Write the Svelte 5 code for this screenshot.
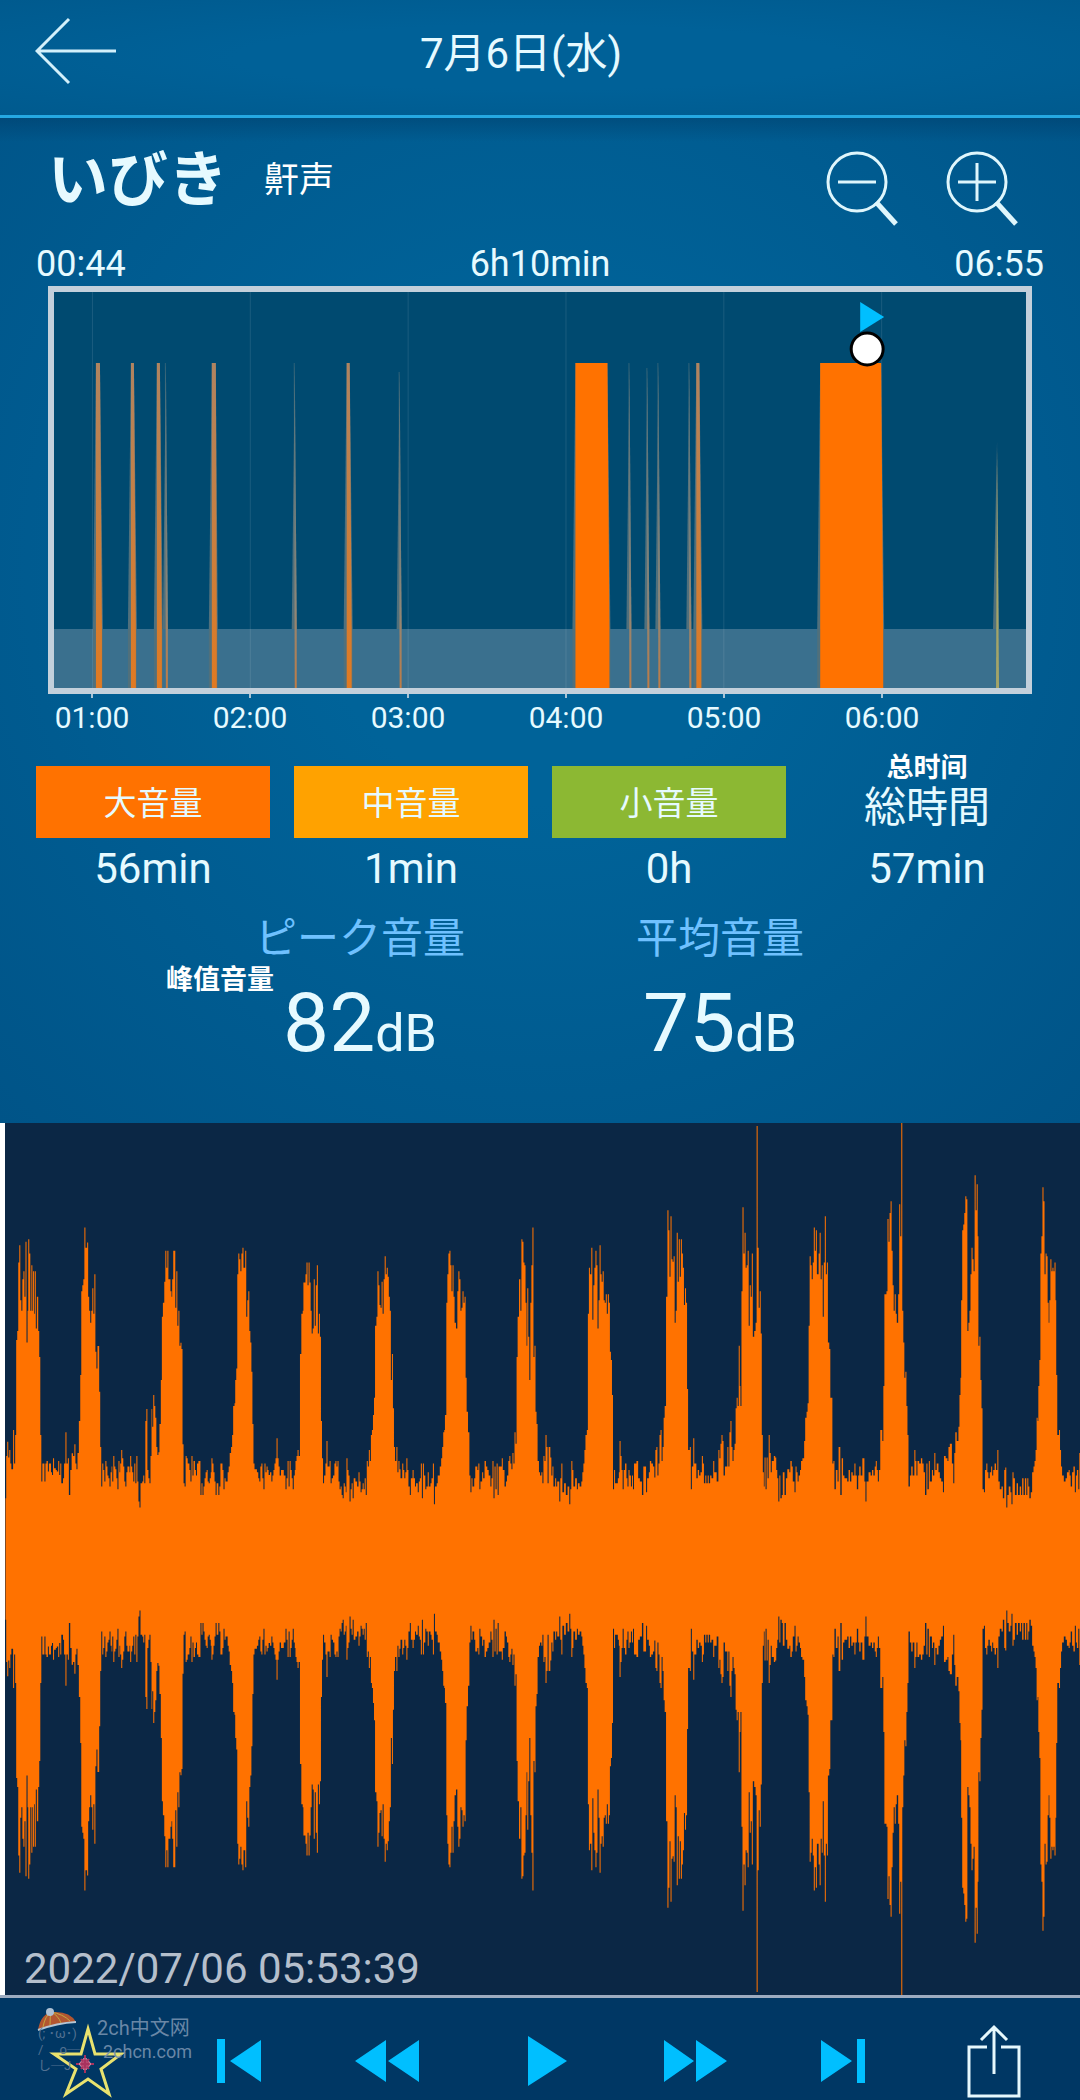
<svelte:head>
    <title>いびき 7月6日(水)</title>
</svelte:head>

<script>
 const hours = ['01:00', '02:00', '03:00', '04:00', '05:00', '06:00'];
 const gridLines = [38, 196, 354, 512, 670, 828];

 // x, top width, bottom width
 const loud = [
     [42, 4, 6],
     [77, 3, 5],
     [103, 3, 5],
     [158, 4, 5],
     [293, 3, 5],
     [522, 32, 34],
     [643, 3, 5],
     [767, 61, 63],
 ];

 // x, top
 const faint = [
     [112, 71],
     [241, 71],
     [346, 80],
     [576, 71],
     [594, 76],
     [605, 71],
     [636, 71],
 ];

 const levels = [
     { name: '大音量', kind: 'high', time: '56min' },
     { name: '中音量', kind: 'medium', time: '1min' },
     { name: '小音量', kind: 'low', time: '0h' },
 ];

 const peaks = [
     { label: 'ピーク音量', value: 82 },
     { label: '平均音量', value: 75 },
 ];

 // upper edge of the recording as "x,y" steps, the lower edge is its mirror
 const firstHalf = `16,1130 18,1003 21,960 24,1008 27,985 30,1026 33,1043 38,925 41,1026 44,940 47,655 50,628 53,422
 56,370 59,535 62,567 65,472 68,448 71,525 74,360 77,662 80,567 82,352 85,395 88,567 91,430 94,567 96,448 99,576
 101,448 104,620 107,525 111,628 114,706 117,940 120,1080 123,1026 129,1080 132,1026 135,1018 139,1050 142,1026
 148,1052 151,1060 154,1010 157,1040 162,1045 165,1050 169,1018 172,1060 175,1026 178,1085 183,1070 186,1026
 190,932 193,1026 197,1010 200,1120 204,1045 208,995 212,1003 216,968 219,1026 222,1043 225,994 229,898 233,760
 236,508 239,490 242,472 245,317 248,378 253,362 256,525 259,567 262,603 265,567 268,499 271,576 274,457 277,690
 280,740 283,673 288,810 291,976 294,1095 297,1026 300,1045 303,1080 306,1018 309,1035 312,1062 315,1070 318,1095
 321,1052 324,1035 326,1080 329,1003 332,1035 335,1043 338,1070 341,1103 344,1018 347,1052 349,1026 352,985
 355,1010 358,1035 361,1080 364,1095 367,1052 370,1035 376,1052 378,1003 381,1035 384,1052 387,1080 390,1026
 393,1085 396,1003 399,1080 402,1140 405,1158 408,1085 413,1080 416,1062 419,1085 422,898 425,862 428,1045
 431,1070 434,1085 437,1003 440,862 442,915 445,820 448,853 451,888 454,976 457,1000 460,992 463,907 467,775
 470,585 473,543 477,480 480,387 483,438 486,387 489,472 495,508 498,525 500,472 503,387 509,558 512,448
 515,612 518,567 521,672 524,663 527,682 530,968 533,1085 536,1095 539,1003 542,1010 545,1026 550,1045 553,1080
 556,1003 559,1062 562,1018 566,1045 569,1062 572,1026 576,1018 582,1120 585,1085 588,1120 591,1095 594,1070
 597,1052 600,1045 603,1080 606,1085 609,1070 612,1052 614,1010 617,1026 620,1052 623,1080 626,1120 629,1085
 634,1120 637,1095 640,1026 646,1045 649,1103 652,1070 655,1080 661,1052 664,1035 667,994 671,976 674,940
 677,853 681,845 683,775 686,740 689,457 692,395 695,412 698,448 701,395 704,378 707,438 712,387 715,585 718,535
 721,508 724,628 727,662 730,750 733,907 736,1026 739,1043 746,1052 750,1070 753,1080 756,1035 759,1026
 762,1070 765,1103 768,1026 771,1052 774,1035 777,1045 780,1060 784,1052 788,1080 791,1062 794,1045 797,1026
 800,1010 803,950 806,1010 809,1035 812,1062 816,1045 824,1062 829,1103 832,1070 835,1018 838,1095 841,1018
 844,1045 847,1070 850,1103 853,1062 856,1045 858,1018 861,1003 864,985 867,1003 871,697 875,576 879,567 881,482
 887,457 890,422 893,490 896,422 899,482 902,567 905,635 908,620 911,472 914,612 917,490 920,430 923,635
 926,576 929,645 932,898 935,1010 938,1085 941,1062 945,1026 948,958 951,1035 957,1018 960,1085 963,1070
 967,1062 971,1026 974,1018 977,1035 980,1018 983,1080 986,1103 989,1095 992,1120 995,1130 998,1085 1001,1095
 1004,1112 1006,1010 1009,1045 1012,1062 1015,1140 1018,1103 1021,1085 1024,1130 1027,1070 1032,1080 1037,1095
 1041,1052 1044,1080 1047,1112 1050,1103 1053,1085 1056,1103 1059,1070 1062,1120 1065,1018 1068,1035 1071,985
 1074,1018 1077,940 1080,925 1083,880 1086,828 1089,612 1093,585 1096,448 1099,490 1102,550 1105,558 1108,480
 1111,576 1114,472 1117,403 1120,457 1123,438 1126,465 1129,525 1132,567 1135,775 1138,697 1141,860 1144,976
 1147,1018 1151,976 1154,1052 1157,1018 1160,1043 1163,1070 1168,1026 1171,1045 1174,1070 1177,1052 1180,1010
 1183,1045 1186,1095 1190,1120 1193,1070 1198,1045 1201,1070 1205,1095 1208,1085 1213,1112 1216,1080 1219,1070
 1222,1026 1225,1130 1228,1026 1231,1062 1235,1103 1238,1095 1242,1052 1245,1095 1250,1085 1253,1070 1257,1026
 1260,1148 1263,1095 1268,1085 1271,1062 1277,1035 1281,1010 1284,976 1287,932 1290,925 1292,880 1296,543
 1299,457 1302,395 1305,387 1308,430 1311,508 1314,430 1317,525 1320,603 1324,620 1328,508 1331,448 1334,472
 1337,567 1340,558 1343,508 1346,543 1349,525 1352,768 1355,870 1359,932 1363,1062 1366,1112 1369,1070 1372,1095
 1377,1070 1380,1035 1386,1045 1389,1026 1392,1103 1395,1080 1400,1052 1403,1070 1407,1018 1411,1035 1415,1045
 1419,1062 1424,1095 1427,1070 1430,1018 1433,1130 1436,1035 1439,1103 1442,1026 1445,1120 1448,1035 1454,1035
 1457,1010 1460,1045 1465,1095 1469,1080 1472,1062 1476,1018 1479,1003 1482,1026 1485,1043 1488,994 1491,1026
 1494,932 1497,966 1500,706 1503,585 1507,472 1511,567 1514,352 1517,360 1520,422 1523,430 1526,543 1529,672
 1531,499 1534,645 1537,775 1540,543 1543,430 1546,317 1549,706 1552,672 1555,870 1558,907 1561,1018 1565,1052`;

 const secondHalf = `0,1062 4,1052 7,1085 10,1003 13,1018 16,940 19,976 22,1085 25,976 30,1008 33,1062 36,1035
 39,1095 44,1070 47,1095 50,1080 56,1140 59,1070 62,1026 65,1112 70,1085 75,1120 80,1095 85,1148 88,1103 91,1018
 94,1045 97,1095 102,1070 107,1103 110,1085 115,1095 120,1080 123,1052 126,1026 129,985 132,940 136,925 139,576
 142,438 145,457 149,378 152,594 155,490 158,438 161,387 164,430 167,620 170,535 173,370 176,457 179,480 182,448
 185,535 188,543 191,517 194,576 197,517 200,543 203,690 206,715 209,820 212,1103 215,1045 218,1085 226,1070
 229,1052 231,958 234,1003 237,1045 240,1103 243,1045 247,1026 251,1070 254,1095 257,1045 260,1062 264,1095
 267,1062 270,1103 273,1026 280,1018 285,1070 290,1080 296,1120 300,1035 308,1112 311,1070 316,1052 319,1018
 323,1026 328,1035 332,1068 335,985 338,976 341,1062 344,1026 347,940 350,925 353,1018 356,976 359,888 362,853
 366,525 370,265 373,325 376,465 379,283 382,412 385,420 388,403 391,603 394,567 397,333 400,480 403,352
 406,465 409,352 412,395 415,438 418,550 421,499 424,543 427,802 430,985 435,976 438,1103 441,1035 445,950
 448,1026 454,1070 458,1045 462,1062 466,1052 470,1003 473,1026 476,1085 480,1062 483,1085 487,1062 490,1085
 494,1062 498,1070 503,1018 506,1052 513,1080 518,985 521,1010 524,966 527,940 530,958 533,1062 537,1035 544,976
 547,1035 550,932 553,898 556,976 559,1018 562,985 565,966 568,860 571,828 574,853 577,672 580,793 582,853
 585,508 588,256 591,395 594,333 597,438 600,430 603,387 606,612 609,490 612,525 615,395 618,645 622,628
 626,603 629,12 632,378 635,558 638,508 641,635 644,940 647,1052 650,1095 652,1008 655,1103 658,1008 661,1070
 664,940 667,994 670,1052 673,1018 679,1003 683,1008 686,1045 689,1070 692,1140 695,1062 698,1130 702,1120
 705,1052 710,1120 714,1070 718,1043 724,1052 727,1018 731,1035 734,1080 739,1112 742,1035 745,1052 748,1080
 751,1062 755,1045 758,1018 762,1010 767,958 770,888 774,870 777,845 780,612 783,403 786,430 789,472 792,422
 795,317 798,387 801,325 804,457 809,395 812,333 815,472 818,430 821,585 824,422 827,283 830,457 833,422
 836,662 840,682 843,828 849,1026 852,1018 855,1103 859,1045 864,1080 867,976 872,1120 876,1010 880,1062
 884,1070 892,1080 896,1045 900,1080 904,1052 908,1062 913,1026 916,1062 920,1103 924,1062 927,1035 931,1062
 936,1010 942,1080 945,1140 948,1080 954,1052 960,1062 964,1045 968,1062 972,1035 975,1018 978,1045 981,1080
 984,1045 988,925 994,958 997,793 1000,517 1006,508 1009,291 1012,360 1015,273 1018,238 1021,387 1024,490
 1027,567 1030,517 1033,576 1036,603 1040,517 1043,247 1046,343 1049,3 1052,567 1055,662 1058,768 1061,750
 1064,853 1067,940 1070,1095 1074,1062 1078,1035 1082,1062 1087,985 1090,1018 1093,1062 1096,1018 1101,1026
 1106,1010 1110,1026 1114,1052 1118,1120 1122,1026 1125,1103 1129,1018 1132,1080 1138,1045 1141,1062 1145,994
 1148,1045 1152,1026 1157,1052 1161,1070 1165,1080 1170,1112 1173,1003 1178,1010 1183,1018 1186,976 1190,966
 1196,1026 1200,1085 1203,994 1206,932 1210,958 1215,915 1218,820 1221,768 1223,535 1226,325 1229,308 1232,273
 1235,223 1238,232 1241,628 1244,603 1247,567 1250,457 1253,378 1256,412 1259,448 1262,160 1265,265 1268,187
 1271,343 1273,672 1276,645 1279,775 1282,860 1285,1103 1289,1112 1292,1045 1296,1026 1299,1052 1302,1070
 1306,1052 1310,1035 1313,1062 1316,1045 1320,1026 1324,1045 1328,985 1331,1080 1335,1103 1340,1095 1344,1130
 1348,1045 1351,1038 1354,1158 1357,1120 1361,1095 1366,1112 1369,1148 1372,1052 1375,1070 1379,1120 1384,1085
 1388,1120 1393,1095 1397,1120 1400,1070 1404,1120 1408,1070 1412,1120 1415,1070 1418,1095 1421,1130 1425,1112
 1429,1052 1433,1035 1436,1018 1439,985 1442,888 1445,898 1447,793 1450,715 1453,395 1456,343 1459,196 1462,238
 1465,457 1468,395 1471,403 1474,543 1477,603 1479,535 1482,412 1485,448 1488,438 1491,448 1494,422 1497,535
 1499,760 1502,940 1507,925 1510,985 1513,1035 1516,1062 1521,1080 1526,1070 1530,1052 1535,1045 1538,1062
 1541,1095 1545,1052 1549,1035 1553,1112 1556,1062 1559,1045 1563,1103 1566,994`;

 const readSamples = (text, offset) => text.trim().split(/\s+/).map((pair) => {
     const [x, y] = pair.split(',').map(Number);
     return [x + offset, y];
 });

 const samples = [...readSamples(firstHalf, 0), ...readSamples(secondHalf, 1568), [3140, 994]];

 const edge = (mirror) => samples.slice(0, -1).map(([x, y], i) => {
     const level = mirror ? 2625 - y : y;
     return `L${x} ${level}H${samples[i + 1][0]}`;
 }).join('');

 const wave = `M16 1312${edge(false)}V1312ZM16 1312${edge(true)}V1312Z`;
</script>

<div class="page">
    <header>
        <button class="back" aria-label="戻る">
            <svg width="82" height="68" viewBox="0 0 82 68">
                <path d="M34 2L2 34L34 66M2 34H81" />
            </svg>
        </button>
        <h1>7月6日(水)</h1>
    </header>

    <main>
        <div class="titleRow">
            <h2>いびき</h2>
            <span class="note large">鼾声</span>
            <div class="zoomButtons">
                <button aria-label="縮小">
                    <svg width="76" height="76" viewBox="0 0 76 76">
                        <circle cx="31" cy="31" r="29" />
                        <path d="M12 31H50" />
                        <path class="handle" d="M50 51L70 73" />
                    </svg>
                </button>
                <button aria-label="拡大">
                    <svg width="76" height="76" viewBox="0 0 76 76">
                        <circle cx="31" cy="31" r="29" />
                        <path d="M12 31H50M31 12V50" />
                        <path class="handle" d="M50 51L70 73" />
                    </svg>
                </button>
            </div>
        </div>

        <div class="range">
            <span>00:44</span>
            <span>6h10min</span>
            <span>06:55</span>
        </div>

        <div class="chart">
            <svg viewBox="0 0 973 396" preserveAspectRatio="none">
                <defs>
                    <linearGradient id="loudFill" x1="0" y1="71" x2="0" y2="396" gradientUnits="userSpaceOnUse">
                        <stop offset="0" stop-color="#b08460" />
                        <stop offset="1" stop-color="#e07a22" />
                    </linearGradient>
                    <linearGradient id="faintFill" x1="0" y1="71" x2="0" y2="396" gradientUnits="userSpaceOnUse">
                        <stop offset="0" stop-color="#58777f" stop-opacity="0.5" />
                        <stop offset="0.75" stop-color="#8d8678" />
                        <stop offset="1" stop-color="#c07c45" />
                    </linearGradient>
                </defs>
                <rect class="quiet" x="0" y="337" width="973" height="59" />
                {#each gridLines as x}
                    <rect class="gridLine" {x} y="0" width="1" height="396" />
                {/each}
                {#each loud as [x, top, bottom]}
                    <path class="side" d="M{x} 71L{x - 3} 337V396H{x + bottom + 1}V337L{x + top} 71Z" />
                    <path class={top > 10 ? 'block' : 'spike'} d="M{x} 71H{x + top}L{x + bottom} 337V396H{x}Z" />
                {/each}
                {#each faint as [x, top]}
                    <path class="side" d="M{x} {top}L{x - 3} 337H{x + 2}Z" />
                    <path class="faint" d="M{x - 1} {top}H{x}L{x + 2} 337V396H{x}Z" />
                {/each}
                <path class="side" d="M944 150L940 337H946Z" />
                <path class="lowSpike" d="M944 160L943 396H946Z" />
                <path class="cursor" d="M807 10L831 25L807 40Z" />
                <circle class="knob" cx="814" cy="57" r="16" />
            </svg>
        </div>
        <div class="axis">
            {#each hours as hour}
                <span>{hour}</span>
            {/each}
        </div>

        <div class="levels">
            {#each levels as level}
                <div class="level">
                    <button class="chip {level.kind}">{level.name}</button>
                    <span>{level.time}</span>
                </div>
            {/each}
            <div class="level">
                <span class="note above">总时间</span>
                <div class="chip total">総時間</div>
                <span>57min</span>
            </div>
        </div>

        <div class="peaks">
            {#each peaks as peak}
                <div class="peak">
                    <h3>{peak.label}</h3>
                    <p>{peak.value}<small>dB</small></p>
                </div>
            {/each}
            <span class="note beside">峰值音量</span>
        </div>
    </main>

    <section class="recording">
        <svg class="wave" viewBox="0 3 3136 2619" preserveAspectRatio="none">
            <path d={wave} />
        </svg>
        <time datetime="2022-07-06T05:53:39">2022/07/06 05:53:39</time>
    </section>

    <footer>
        <button aria-label="お気に入り">
            <svg width="80" height="102" viewBox="0 0 80 102">
                <path class="star" d="M40 31L47 56H73L53 71L61 96L40 81L18 96L28 71L6 56H33Z" />
                <path class="gem" d="M37 59L43 66L37 73L31 66Z" />
                <path class="gemLine" d="M28 66H47M37 57V77M33 61L41 71M41 61L33 71" />
            </svg>
        </button>
        <button aria-label="最初へ">
            <svg width="80" height="102" viewBox="0 0 80 102">
                <path d="M18 41H26V85H18ZM62 42V84L31 63Z" />
            </svg>
        </button>
        <button aria-label="早戻し">
            <svg width="80" height="102" viewBox="0 0 80 102">
                <path d="M36 42V84L5 63ZM69 42V84L38 63Z" />
            </svg>
        </button>
        <button aria-label="再生">
            <svg width="80" height="102" viewBox="0 0 80 102">
                <path d="M27 38V88L66 63Z" />
            </svg>
        </button>
        <button aria-label="早送り">
            <svg width="80" height="102" viewBox="0 0 80 102">
                <path d="M12 42V84L42 63ZM44 42V84L75 63Z" />
            </svg>
        </button>
        <button aria-label="最後へ">
            <svg width="80" height="102" viewBox="0 0 80 102">
                <path d="M18 42V84L49 63ZM54 41H62V85H54Z" />
            </svg>
        </button>
        <button aria-label="共有">
            <svg width="80" height="102" viewBox="0 0 80 102">
                <path class="share" d="M33 49H15V98H65V49H47M40 76V29M27 42L40 29L53 42" />
            </svg>
        </button>

        <div class="watermark">
            <svg width="60" height="66" viewBox="0 0 60 66">
                <path class="hat" d="M1 22Q4 5 16 4Q33 3 39 14Q20 15 1 22Z" />
                <path class="seam" d="M6 19Q8 8 14 4M13 17Q13 8 14 4M24 15Q21 7 14 4M33 13Q26 6 14 4" />
                <path class="brim" d="M1 22Q20 15 39 14" />
                <circle class="pompom" cx="13" cy="4" r="4" />
                <text x="1" y="30">(; ･ω･)</text>
                <text x="1" y="46">/　 o─</text>
                <text x="1" y="62">し─J</text>
            </svg>
            <div>
                <strong>2ch中文网</strong>
                <span>2chcn.com</span>
            </div>
        </div>
    </footer>
</div>

<style>
 :global(body) {
     margin: 0;
 }

 .page {
     display: flex;
     flex-direction: column;
     min-height: 100vh;
     background: #005f94;
     color: #e6faff;
     font-family: Roboto, "Noto Sans CJK JP", sans-serif;
 }

 button {
     padding: 0;
     border: none;
     background: none;
     color: inherit;
     font: inherit;
     cursor: pointer;
 }

 svg {
     display: block;
 }

 h1, h2, h3, p {
     margin: 0;
     font-weight: 400;
 }

 header {
     display: grid;
     grid-template-columns: 120px 1fr 158px;
     align-items: center;
     height: 115px;
     border-bottom: 3px solid #25a8e2;
     background: radial-gradient(ellipse at center, #006198 40%, #005a8e);
 }

 .back {
     margin: 0 0 14px 35px;
 }

 .back path {
     fill: none;
     stroke: #d3f0fb;
     stroke-width: 3;
 }

 h1 {
     padding-bottom: 8px;
     font-size: 42px;
     line-height: 60px;
     text-align: center;
 }

 main {
     padding-bottom: 36px;
     background:
         linear-gradient(rgba(0, 50, 90, 0.35), transparent 24px),
         radial-gradient(ellipse at 50% 45%, #006399 30%, #005488);
 }

 .titleRow {
     display: flex;
     align-items: center;
     height: 126px;
     padding: 0 58px 0 48px;
 }

 h2 {
     font-size: 60px;
     font-weight: 700;
     line-height: 80px;
 }

 .note {
     color: #fff;
     font-family: "Noto Sans CJK SC", sans-serif;
     font-size: 27px;
     font-weight: 700;
     line-height: 32px;
 }

 .note.large {
     margin-left: 36px;
     padding-bottom: 8px;
     font-size: 35px;
     font-weight: 400;
 }

 .zoomButtons {
     display: flex;
     gap: 44px;
     margin-left: auto;
     padding-top: 16px;
 }

 .zoomButtons svg {
     fill: none;
     stroke: #dff6fc;
     stroke-width: 3;
 }

 .zoomButtons .handle {
     stroke-width: 5;
 }

 .range {
     display: grid;
     grid-template-columns: 1fr 1fr 1fr;
     padding: 0 36px 2px;
     font-size: 36px;
     line-height: 40px;
     text-align: center;
 }

 .range span:first-child {
     text-align: left;
 }

 .range span:last-child {
     text-align: right;
 }

 .chart {
     margin: 0 48px;
     border: 6px solid #c3d0db;
     background: #004a70;
 }

 .chart svg {
     width: 100%;
     height: 396px;
 }

 .quiet {
     fill: #3a708e;
 }

 .gridLine {
     fill: #fff;
     opacity: 0.1;
 }

 .side {
     fill: #50707c;
 }

 .spike {
     fill: url(#loudFill);
 }

 .block {
     fill: #ff7200;
 }

 .faint {
     fill: url(#faintFill);
 }

 .lowSpike {
     fill: #a4a468;
 }

 .cursor {
     fill: #00bfff;
 }

 .knob {
     fill: #fff;
     stroke: #000;
     stroke-width: 3;
 }

 .axis {
     display: grid;
     grid-template-columns: repeat(6, 1fr);
     padding: 0 119px 0 13px;
     font-size: 30px;
     line-height: 40px;
     text-align: center;
 }

 .axis span::before {
     content: "";
     display: block;
     width: 2px;
     height: 4px;
     margin: 0 auto;
     background: #a9c4d6;
 }

 .levels {
     display: grid;
     grid-template-columns: repeat(4, 1fr);
     gap: 24px;
     padding: 28px 36px 0;
 }

 .level {
     position: relative;
     display: flex;
     flex-direction: column;
     align-items: center;
     font-size: 42px;
     line-height: 62px;
 }

 .chip {
     width: 100%;
     height: 72px;
     padding-top: 2px;
     box-sizing: border-box;
     font-size: 33px;
     line-height: 72px;
     text-align: center;
 }

 .high {
     background: #ff7200;
 }

 .medium {
     background: #ffa200;
 }

 .low {
     background: #8cb833;
 }

 .total {
     padding-top: 6px;
     font-size: 42px;
 }

 .above {
     position: absolute;
     top: -16px;
 }

 .peaks {
     position: relative;
     display: grid;
     grid-template-columns: 1fr 1fr;
     padding: 8px 180px 0;
     text-align: center;
 }

 h3 {
     color: #6fc1ff;
     font-size: 42px;
     line-height: 62px;
 }

 .peak p {
     font-size: 82px;
     line-height: 106px;
 }

 .peak small {
     font-size: 52px;
 }

 .beside {
     position: absolute;
     top: 62px;
     left: 166px;
 }

 .recording {
     position: relative;
     display: flex;
     flex: 1;
     min-height: 600px;
     border-bottom: 3px solid #9dabc0;
     background: linear-gradient(90deg, #fff 5px, #0b2745 5px);
 }

 /* sized by the section, not by the viewBox ratio */
 .wave {
     flex: 1;
     contain: size;
     fill: #ff7200;
 }

 time {
     position: absolute;
     bottom: 0;
     left: 24px;
     color: #b5bfcc;
     font-size: 42px;
     line-height: 52px;
 }

 footer {
     position: relative;
     display: grid;
     grid-template-columns: repeat(7, 1fr);
     justify-items: center;
     padding: 0 11px 0 12px;
     background: #003764;
 }

 footer button svg {
     fill: #00bfff;
 }

 footer .star {
     fill: none;
     stroke: #e9e26e;
     stroke-width: 3;
 }

 footer .gem {
     fill: #b5476f;
     stroke: #d58fa8;
 }

 footer .gemLine {
     fill: none;
     stroke: #a8325e;
     stroke-width: 2;
     stroke-dasharray: 3 2;
 }

 footer .share {
     fill: none;
     stroke: #e6f8fd;
     stroke-width: 3;
 }

 .watermark {
     position: absolute;
     top: 10px;
     left: 37px;
     display: flex;
     color: #7590ae;
     font-family: Roboto, "Noto Sans CJK SC", sans-serif;
     opacity: 0.9;
     pointer-events: none;
 }

 .watermark div {
     display: flex;
     flex-direction: column;
     padding-top: 8px;
     line-height: 24px;
 }

 .watermark strong {
     font-size: 20px;
     font-weight: 400;
 }

 .watermark span {
     padding-left: 6px;
     font-size: 18px;
 }

 .watermark text {
     fill: #5c7897;
     font-size: 13px;
 }

 .hat {
     fill: #c65a2c;
 }

 .seam {
     fill: none;
     stroke: #d9b53d;
 }

 .brim {
     fill: none;
     stroke: #c9d6e2;
     stroke-width: 2;
 }

 .pompom {
     fill: #c0cfe0;
 }
</style>
